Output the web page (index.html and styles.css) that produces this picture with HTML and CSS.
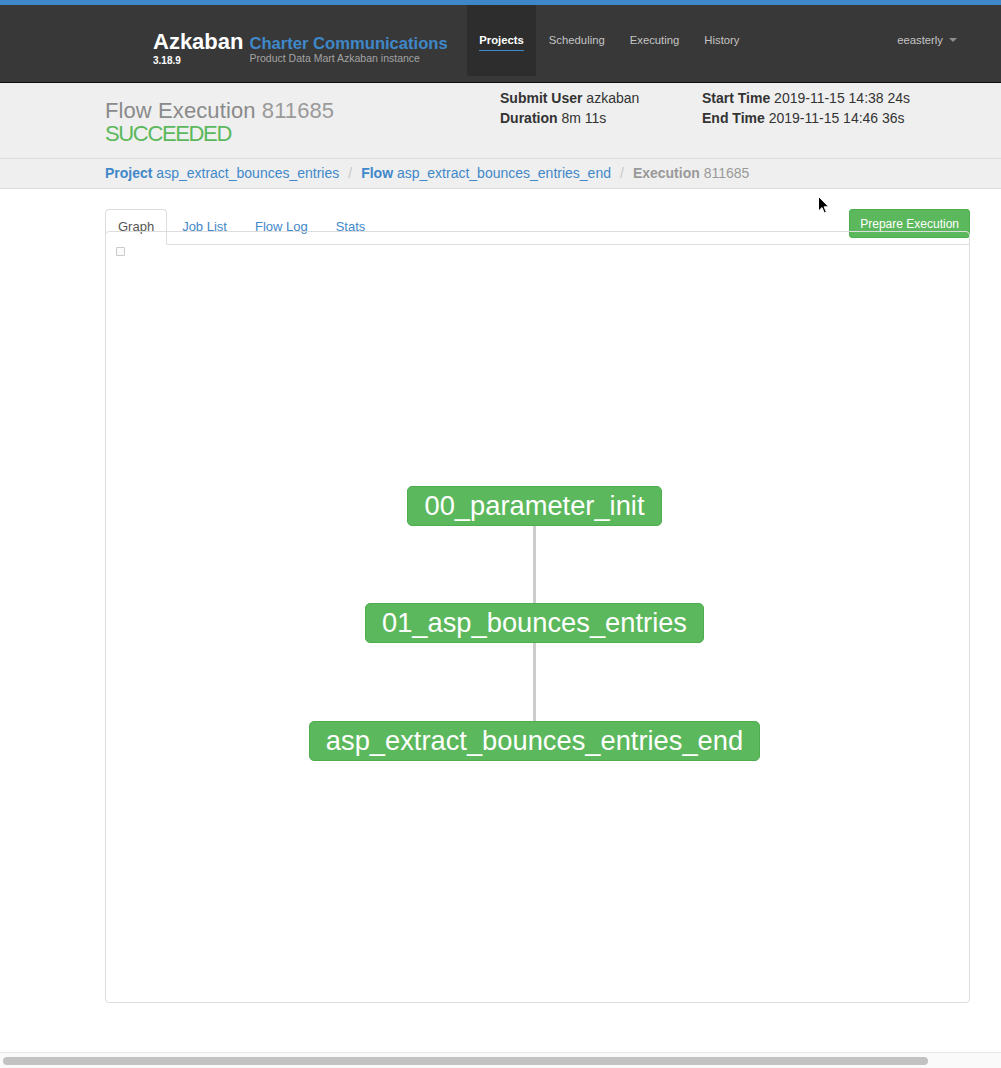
FILE: index.html
```html
<!DOCTYPE html>
<html lang="en">
<head>
<meta charset="utf-8">
<title>Azkaban - Flow Execution</title>
<link rel="stylesheet" href="styles.css">
</head>
<body>
<div class="topbar"></div>
<header class="navbar">
  <div class="brand">
    <div class="brand-main">
      <div class="brand-name">Azkaban</div>
      <div class="brand-ver">3.18.9</div>
    </div>
    <div class="brand-org">
      <div class="org-name">Charter Communications</div>
      <div class="org-desc">Product Data Mart Azkaban instance</div>
    </div>
  </div>
  <ul class="nav">
    <li class="nav-item active"><a href="#"><span>Projects</span></a></li>
    <li class="nav-item"><a href="#"><span>Scheduling</span></a></li>
    <li class="nav-item"><a href="#"><span>Executing</span></a></li>
    <li class="nav-item"><a href="#"><span>History</span></a></li>
  </ul>
  <div class="user">eeasterly<span class="caret"></span></div>
</header>

<section class="exec-header">
  <div class="title-col">
    <div class="title">Flow Execution <span class="exec-id">811685</span></div>
    <div class="status">SUCCEEDED</div>
  </div>
  <div class="info-col info-col-1">
    <div><b>Submit User</b> azkaban</div>
    <div><b>Duration</b> 8m 11s</div>
  </div>
  <div class="info-col">
    <div><b>Start Time</b> 2019-11-15 14:38 24s</div>
    <div><b>End Time</b> 2019-11-15 14:46 36s</div>
  </div>
</section>

<nav class="crumbs">
  <a href="#" class="crumb"><b>Project</b> asp_extract_bounces_entries</a>
  <span class="sep">/</span>
  <a href="#" class="crumb"><b>Flow</b> asp_extract_bounces_entries_end</a>
  <span class="sep">/</span>
  <span class="crumb current"><b>Execution</b> 811685</span>
</nav>

<main class="content">
  <div class="tabbar">
    <ul class="tabs">
      <li class="tab active"><a href="#">Graph</a></li>
      <li class="tab"><a href="#">Job List</a></li>
      <li class="tab"><a href="#">Flow Log</a></li>
      <li class="tab"><a href="#">Stats</a></li>
    </ul>
    <button class="btn-prepare">Prepare Execution</button>
  </div>
  <div class="panel">
    <div class="toggle"></div>
    <div class="graph">
      <div class="node">00_parameter_init</div>
      <div class="edge"></div>
      <div class="node">01_asp_bounces_entries</div>
      <div class="edge edge-long"></div>
      <div class="node">asp_extract_bounces_entries_end</div>
    </div>
  </div>
</main>

<div class="hscroll"><div class="hscroll-thumb"></div></div>

<svg class="cursor" width="13" height="20" viewBox="0 0 13 20" aria-hidden="true">
  <path d="M1.5 1.5 L1.5 16 L5 12.6 L7.3 18 L9.4 17.1 L7.1 11.8 L11.6 11.8 Z" fill="#000" stroke="#fff" stroke-width="1" stroke-linejoin="round"/>
</svg>
</body>
</html>
```

FILE: styles.css
```css
* { box-sizing: border-box; }

html, body { height: 100%; }

body {
  margin: 0;
  min-height: 100vh;
  display: flex;
  flex-direction: column;
  font-family: "Liberation Sans", Arial, Helvetica, sans-serif;
  color: #333;
  background: #fff;
  position: relative;
  overflow: hidden;
}

a { text-decoration: none; }

/* ---------- top bar / navbar ---------- */
.topbar {
  height: 5px;
  background: #3e88c9;
  flex: none;
}

.navbar {
  flex: none;
  display: flex;
  align-items: flex-start;
  height: 78px;
  padding-left: 153px;
  padding-right: 44px;
  background: #383838;
  border-bottom: 1px solid #101010;
}

.brand {
  display: flex;
  align-items: flex-start;
}

.brand-main { margin-top: 24.4px; }

.brand-name {
  font-size: 22px;
  font-weight: bold;
  line-height: 26px;
  color: #fff;
}

.brand-ver {
  font-size: 10px;
  font-weight: bold;
  line-height: 12px;
  color: #fff;
}

.brand-org {
  margin-left: 6px;
  margin-top: 29.6px;
}

.org-name {
  font-size: 16.6px;
  font-weight: bold;
  line-height: 18px;
  color: #3f88c9;
}

.org-desc {
  font-size: 10.5px;
  line-height: 10px;
  color: #a3a3a3;
}

.nav {
  display: flex;
  list-style: none;
  margin: 0 0 0 19px;
  padding: 0;
}

.nav-item a {
  display: block;
  height: 71px;
  padding: 27px 12.5px 0;
  font-size: 11.3px;
  line-height: 16px;
  color: #c4c4c4;
}

.nav-item a span {
  display: inline-block;
  padding-bottom: 2px;
  border-bottom: 1px solid transparent;
}

.nav-item.active a {
  background: #2d2d2d;
  color: #fff;
  font-weight: bold;
}

.nav-item.active a span { border-bottom-color: #3f88c9; }

.user {
  margin-left: auto;
  padding-top: 27px;
  font-size: 11.3px;
  line-height: 16px;
  color: #c4c4c4;
}

.caret {
  display: inline-block;
  width: 0;
  height: 0;
  margin-left: 6px;
  vertical-align: 2px;
  border-top: 4px solid #8e8e8e;
  border-left: 4px solid transparent;
  border-right: 4px solid transparent;
}

/* ---------- execution header ---------- */
.exec-header {
  flex: none;
  display: flex;
  align-items: flex-start;
  height: 76px;
  padding-left: 105px;
  background: #efefef;
  border-bottom: 1px solid #dcdcdc;
}

.title-col {
  width: 395px;
  margin-top: 16px;
}

.title {
  font-size: 22px;
  line-height: 23px;
  color: #8a8a8a;
  letter-spacing: 0.1px;
}

.exec-id { color: #9a9a9a; }

.status {
  font-size: 22px;
  line-height: 23px;
  color: #5cb85c;
  letter-spacing: -1.35px;
}

.info-col {
  margin-top: 5px;
  font-size: 14px;
  line-height: 20px;
  color: #333;
}

.info-col-1 { width: 202px; }

/* ---------- breadcrumb ---------- */
.crumbs {
  flex: none;
  height: 30px;
  padding: 4px 0 0 105px;
  font-size: 14px;
  line-height: 20px;
  background: #efefef;
  border-bottom: 1px solid #dcdcdc;
  display: flex;
}

.crumb { color: #3f88c9; }

.crumb.current { color: #999; }

.sep {
  color: #c8c8c8;
  margin: 0 9px;
}

/* ---------- content ---------- */
.content {
  flex: none;
  padding: 20px 31px 0 105px;
}

.tabbar {
  display: flex;
  align-items: flex-start;
  border-bottom: 1px solid #dddddd;
}

.tabs {
  display: flex;
  list-style: none;
  margin: 0;
  padding: 0;
}

.tab { margin-right: 2px; }

.tab a {
  display: block;
  padding: 8px 12px;
  margin-bottom: -1px;
  font-size: 13px;
  line-height: 18px;
  color: #3f88c9;
  border: 1px solid transparent;
  border-radius: 4px 4px 0 0;
}

.tab.active a {
  color: #555;
  background: #fff;
  border-color: #dddddd;
  border-bottom-color: #fff;
}

.btn-prepare {
  margin-left: auto;
  height: 29px;
  padding: 1px 10px 0;
  font-family: inherit;
  font-size: 12px;
  line-height: 17px;
  color: #fff;
  background: #5cb85c;
  border: 1px solid #4cae4c;
  border-radius: 3px;
}

.panel {
  position: relative;
  z-index: 1;
  height: 772px;
  margin-top: -14px;
  border: 1px solid #dddddd;
  border-radius: 4px;
  background: transparent;
}

.toggle {
  width: 9px;
  height: 9px;
  margin: 15px 0 0 10px;
  border: 1px solid #c9c9c9;
  border-radius: 1px;
  background: #fbfbfb;
}

.graph {
  display: flex;
  flex-direction: column;
  align-items: center;
  margin-top: 230px;
  padding-right: 6px;
}

.node {
  height: 40px;
  padding: 0 16px;
  font-size: 27.3px;
  line-height: 38px;
  color: #fff;
  white-space: nowrap;
  background: #5cb85c;
  border: 1px solid #4eae4e;
  border-radius: 5px;
}

.edge {
  width: 3px;
  height: 77px;
  background: #cccccc;
}

.edge-long { height: 78px; }

/* ---------- fake horizontal scrollbar ---------- */
.hscroll {
  flex: none;
  margin-top: auto;
  height: 16px;
  background: #fafafa;
  border-top: 1px solid #e6e6e6;
  padding: 4px 0 0 3px;
}

.hscroll-thumb {
  width: 925px;
  height: 8px;
  border-radius: 4px;
  background: #c2c2c2;
}

.cursor {
  position: absolute;
  left: 817px;
  top: 195px;
  z-index: 5;
}
```
